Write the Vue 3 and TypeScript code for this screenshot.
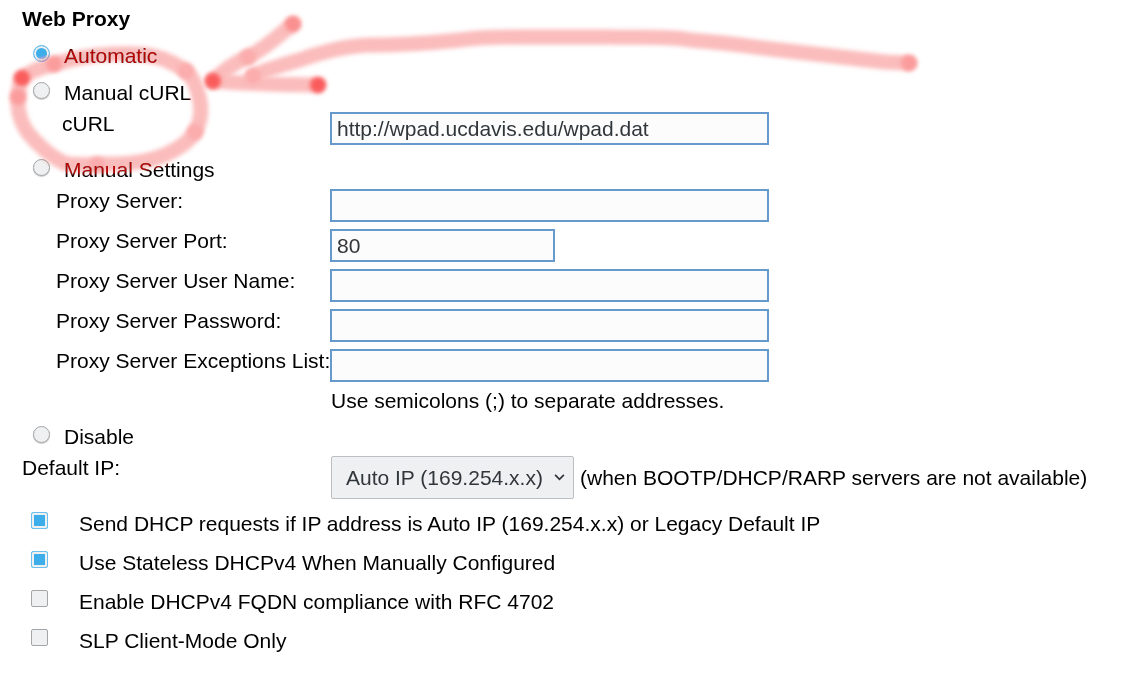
<script setup lang="ts">
import { reactive, ref } from 'vue'

interface Field {
  id: string
  label: string
  value: string
  type: string
  short?: boolean
}

interface Option {
  id: string
  label: string
  checked: boolean
}

interface Dot {
  x: number
  y: number
  tone: string
}

const mode = ref('automatic')
const curl = ref('http://wpad.ucdavis.edu/wpad.dat')
const defaultIp = ref('auto')

const fields = reactive<Field[]>([
  { id: 'server', label: 'Proxy Server:', value: '', type: 'text' },
  { id: 'port', label: 'Proxy Server Port:', value: '80', type: 'text', short: true },
  { id: 'user', label: 'Proxy Server User Name:', value: '', type: 'text' },
  { id: 'password', label: 'Proxy Server Password:', value: '', type: 'password' },
  { id: 'exceptions', label: 'Proxy Server Exceptions List:', value: '', type: 'text' },
])

const options = reactive<Option[]>([
  { id: 'send', label: 'Send DHCP requests if IP address is Auto IP (169.254.x.x) or Legacy Default IP', checked: true },
  { id: 'stateless', label: 'Use Stateless DHCPv4 When Manually Configured', checked: true },
  { id: 'fqdn', label: 'Enable DHCPv4 FQDN compliance with RFC 4702', checked: false },
  { id: 'slp', label: 'SLP Client-Mode Only', checked: false },
])

const strokes: string[] = [
  'M21 79 C30 71 42 67 55 64 C75 58 92 55 112 54 C135 53 153 54 168 61 C182 67 190 73 194 82 C202 100 203 118 195 132 C187 145 168 155 153 159 C135 164 120 164 100 164 C84 165 72 165 64 163 C50 156 38 145 28 133 C18 118 15 104 21 79',
  'M213 81 C224 70 236 62 248 57 C266 48 279 35 293 24',
  'M213 81 C240 83 280 85 318 85',
  'M253 76 C268 68 292 63 308 57 C330 50 350 45 372 45 C400 45 430 43 460 40 C480 37 500 37 520 37 L610 37 C650 38 670 36 690 40 C730 43 745 46 780 50 L885 62 L909 63',
]

const dots: Dot[] = [
  { x: 22, y: 78, tone: 'strong' },
  { x: 18, y: 97, tone: 'soft' },
  { x: 54, y: 64, tone: 'soft' },
  { x: 186, y: 71, tone: 'faint' },
  { x: 195, y: 132, tone: 'faint' },
  { x: 97, y: 165, tone: 'faint' },
  { x: 248, y: 57, tone: 'faint' },
  { x: 253, y: 76, tone: 'faint' },
  { x: 213, y: 81, tone: 'strong' },
  { x: 318, y: 85, tone: 'strong' },
  { x: 293, y: 24, tone: 'medium' },
  { x: 909, y: 63, tone: 'soft' },
]
</script>

<template>
  <main class="page">
    <form @submit.prevent>
      <h1>Web Proxy</h1>

      <label class="choice">
        <input v-model="mode" type="radio" name="mode" value="automatic" />
        <span>Automatic</span>
      </label>
      <label class="choice">
        <input v-model="mode" type="radio" name="mode" value="curl" />
        <span>Manual cURL</span>
      </label>
      <div class="field curl">
        <label for="curl">cURL</label>
        <input id="curl" v-model="curl" type="text" />
      </div>
      <label class="choice">
        <input v-model="mode" type="radio" name="mode" value="manual" />
        <span>Manual Settings</span>
      </label>

      <div v-for="f in fields" :key="f.id" class="field">
        <label :for="f.id">{{ f.label }}</label>
        <input :id="f.id" v-model="f.value" :type="f.type" :class="{ short: f.short }" />
      </div>
      <p class="note">Use semicolons (;) to separate addresses.</p>

      <label class="choice">
        <input v-model="mode" type="radio" name="mode" value="disable" />
        <span>Disable</span>
      </label>

      <div class="default-ip">
        <label for="default-ip">Default IP:</label>
        <div class="select">
          <select id="default-ip" v-model="defaultIp">
            <option value="auto">Auto IP (169.254.x.x)</option>
          </select>
          <svg class="chevron" viewBox="0 0 12 8" aria-hidden="true">
            <path d="M1 1 L6 6 L11 1" />
          </svg>
        </div>
        <span class="hint">(when BOOTP/DHCP/RARP servers are not available)</span>
      </div>

      <label v-for="o in options" :key="o.id" class="check">
        <input v-model="o.checked" type="checkbox" />
        <span>{{ o.label }}</span>
      </label>
    </form>

    <!-- Marker drawn over the form: one layer tints the paper, the other the ink. -->
    <svg v-for="layer in ['paper', 'ink']" :key="layer" class="marker" :class="layer" aria-hidden="true">
      <path v-for="(d, i) in strokes" :key="i" class="stroke" :d="d" />
      <template v-if="layer === 'paper'">
        <circle v-for="(p, i) in dots" :key="i" class="dot" :class="p.tone" :cx="p.x" :cy="p.y" r="8" />
      </template>
    </svg>
  </main>
</template>

<style>
body {
  margin: 0;
  background: #fff;
}
</style>

<style scoped>
.page {
  position: relative;
  min-height: 100vh;
  box-sizing: border-box;
  padding: 7px 22px 0;
  overflow: hidden;
  background: #fff;
  color: #000;
  font: 21px/24px "Liberation Sans", Arial, sans-serif;
}

h1 {
  margin: 0 0 7px;
  font-size: 21px;
  line-height: 24px;
}

.choice {
  display: flex;
  gap: 14px;
  height: 37px;
  padding-left: 11px;
}

.choice span {
  padding-top: 6px;
}

input[type='radio'],
input[type='checkbox'] {
  appearance: none;
  flex: none;
  box-sizing: border-box;
  width: 17px;
  height: 17px;
  margin: 7px 0 0;
  border: 1px solid #a3a5a7;
  background: #eff0f1;
}

input[type='radio'] {
  border-radius: 50%;
  box-shadow: 0 1px 1px #0003;
}

input[type='checkbox'] {
  border-radius: 2px;
}

input:checked {
  border-color: #6cc0ee;
  background: #3daee9;
  box-shadow: inset 0 0 0 2px #eff0f1;
}

.field,
.default-ip {
  display: flex;
  align-items: flex-start;
}

.field {
  height: 40px;
  padding-left: 34px;
}

.field label {
  flex: none;
  width: 274px;
  white-space: nowrap;
}

.field.curl {
  padding-left: 40px;
}

.field.curl label {
  width: 268px;
}

.field input {
  box-sizing: border-box;
  width: 439px;
  height: 33px;
  padding: 0 5px;
  border: 2px solid #6699cc;
  border-radius: 0;
  background: #fcfcfc;
  color: #31363b;
  font: inherit;
}

.field input.short {
  width: 225px;
}

.note {
  margin: 0 0 6px 309px;
  line-height: 24px;
}

.default-ip {
  margin-bottom: 6px;
}

.default-ip label {
  flex: none;
  width: 309px;
}

.select {
  position: relative;
  flex: none;
  width: 243px;
  margin-right: 6px;
}

select {
  appearance: none;
  box-sizing: border-box;
  width: 100%;
  height: 43px;
  padding: 0 14px;
  border: 1px solid #bcbfc1;
  border-radius: 2px;
  background: #eff0f1;
  color: #31363b;
  font: inherit;
}

.chevron {
  position: absolute;
  top: 18px;
  right: 9px;
  width: 11px;
  height: 7px;
  fill: none;
  stroke: #31363b;
  stroke-width: 2;
  pointer-events: none;
}

.hint {
  line-height: 43px;
  white-space: nowrap;
}

.check {
  display: flex;
  gap: 31px;
  height: 39px;
  padding-left: 9px;
}

.check span {
  padding-top: 7px;
}

.marker {
  position: absolute;
  inset: 0;
  width: 100%;
  height: 100%;
  pointer-events: none;
}

.stroke {
  fill: none;
  stroke-linecap: round;
  stroke-linejoin: round;
}

.paper {
  mix-blend-mode: multiply;
}

.paper .stroke {
  stroke: #fbbcbc;
  stroke-width: 15;
  filter: blur(2px);
}

.ink {
  mix-blend-mode: lighten;
}

.ink .stroke {
  stroke: #b80000;
  stroke-width: 20;
  filter: blur(1px);
}

.dot {
  filter: blur(2px);
}

.strong {
  fill: #fa5c5c;
}

.medium {
  fill: #fa9090;
}

.soft {
  fill: #fb9c9c;
}

.faint {
  fill: #fbacac;
}
</style>
